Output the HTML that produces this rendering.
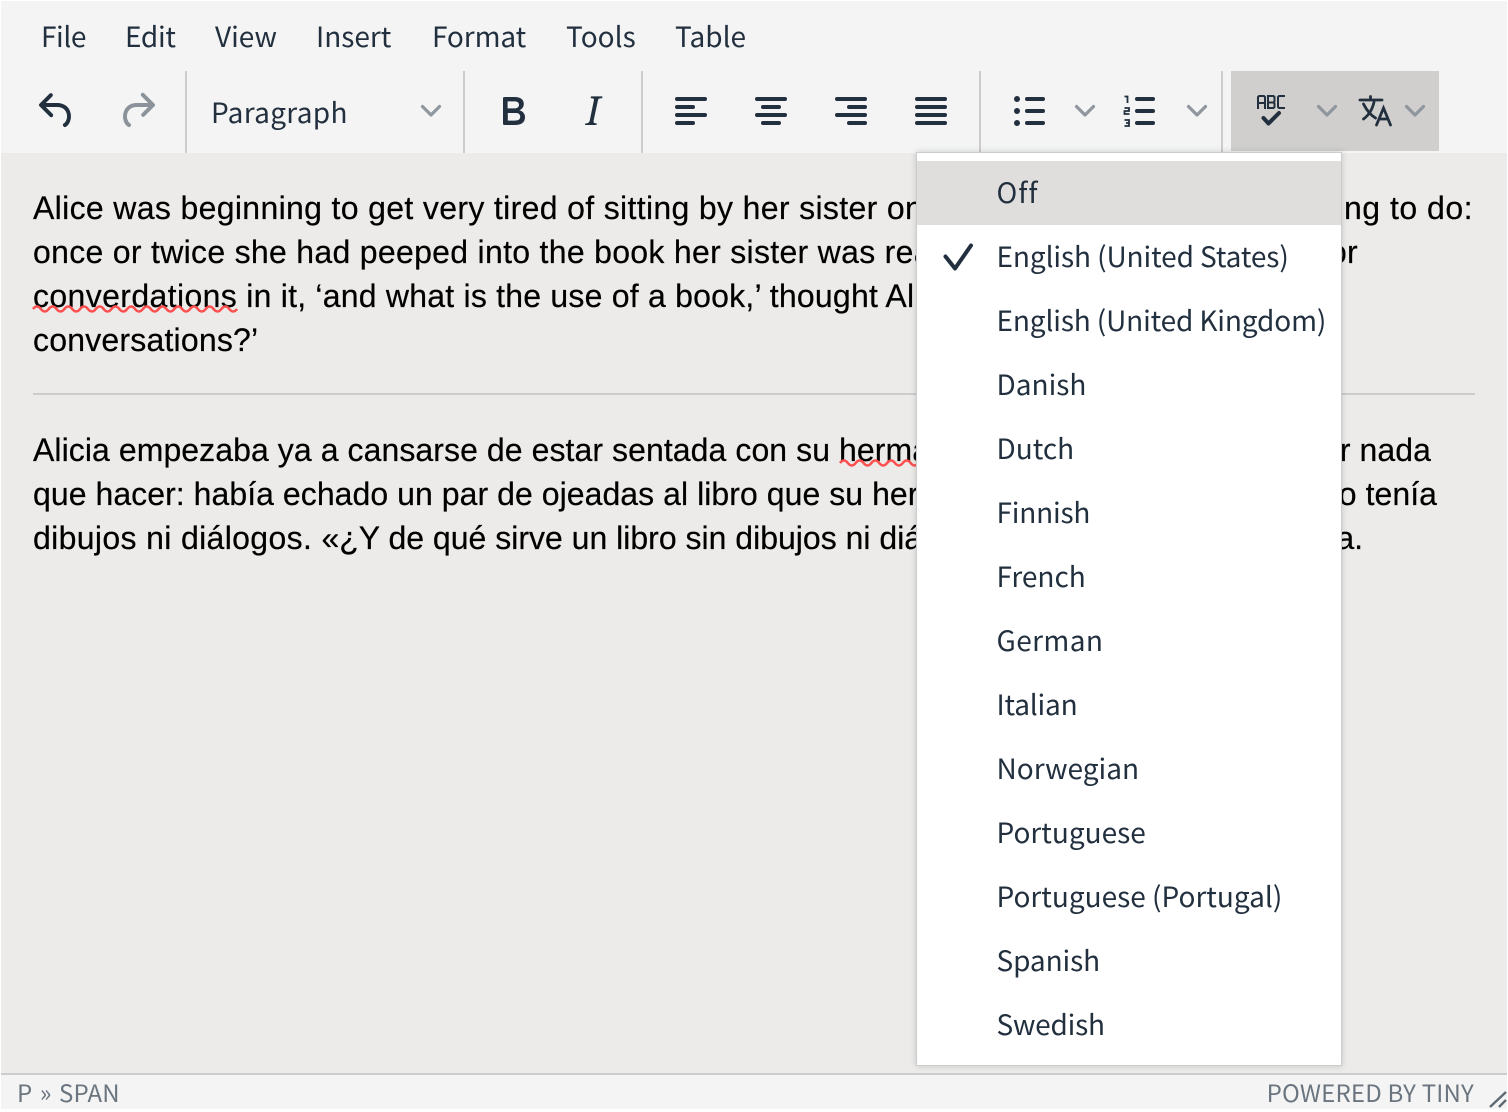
<!DOCTYPE html>
<html><head><meta charset="utf-8">
<style>
html,body{margin:0;padding:0;width:1508px;height:1110px;overflow:hidden;background:#fff}
*{box-sizing:border-box}
#a{position:absolute;left:1px;width:1506px;background:#ecebe9}
.t{position:absolute;white-space:nowrap;font-family:"Noto Sans CJK JP","Liberation Sans",sans-serif;color:#222f3e;font-size:28px;line-height:40px}
.c{position:absolute;white-space:nowrap;font-family:"Liberation Sans",Arial,sans-serif;color:#000;font-size:32px;line-height:44px;-webkit-text-stroke:.2px #000}
.l{left:33px}
.b{position:absolute;background:#ccc}
svg{position:absolute;left:0;top:0}
</style></head><body>
<div class="b" style="left:1px;top:1px;width:1506px;height:152px;background:#f4f4f4"></div>
<div id="a" style="top:153px;height:921px"></div>
<div class="b" style="left:1px;top:1073px;width:1506px;height:2px;background:#ccc"></div>
<div class="b" style="left:1px;top:1075px;width:1506px;height:34px;background:#f4f4f4"></div>

<div class="t" style="left:41px;top:16px;letter-spacing:-.4px">File</div>
<div class="t" style="left:125px;top:16px;letter-spacing:-.3px">Edit</div>
<div class="t" style="left:215px;top:16px">View</div>
<div class="t" style="left:316px;top:16px">Insert</div>
<div class="t" style="left:432px;top:16px;letter-spacing:-.1px">Format</div>
<div class="t" style="left:566px;top:16px">Tools</div>
<div class="t" style="left:675px;top:16px">Table</div>
<div class="t" style="left:211px;top:92px;letter-spacing:.3px">Paragraph</div>

<div class="b" style="left:185px;top:71px;width:2px;height:82px"></div>
<div class="b" style="left:463px;top:71px;width:2px;height:82px"></div>
<div class="b" style="left:641px;top:71px;width:2px;height:82px"></div>
<div class="b" style="left:979px;top:71px;width:2px;height:82px"></div>
<div class="b" style="left:1221px;top:71px;width:2px;height:82px"></div>
<div class="b" style="left:1231px;top:71px;width:208px;height:80px;background:#d0cfcd"></div>

<svg width="1508" height="1110" viewBox="0 0 1508 1110" fill="#222f3e">
<path transform="translate(33 87) scale(2)" d="M6.4 8H12c3.7 0 6.2 2 6.8 5.1.6 2.7-.4 5.6-2.3 6.8a1 1 0 0 1-1-1.8c1.1-.6 1.8-2.7 1.4-4.6-.5-2.1-2.1-3.5-4.9-3.5H6.4l3.3 3.3a1 1 0 1 1-1.4 1.4l-5-5a1 1 0 0 1 0-1.4l5-5a1 1 0 0 1 1.4 1.4L6.4 8Z"/>
<path transform="translate(113 87) scale(2)" opacity=".5" d="M17.6 10H12c-2.8 0-4.4 1.4-4.9 3.5-.4 2 .3 4 1.4 4.6a1 1 0 1 1-1 1.8c-2-1.2-2.9-4.1-2.3-6.8.6-3 3-5.1 6.8-5.1h5.6l-3.3-3.3a1 1 0 1 1 1.4-1.4l5 5a1 1 0 0 1 0 1.4l-5 5a1 1 0 0 1-1.4-1.4l3.3-3.3Z"/>
<path transform="translate(489 87) scale(2)" d="M7.8 19c-.3 0-.5 0-.6-.2l-.2-.5V5.7c0-.2 0-.4.2-.5l.6-.2h5c1.5 0 2.7.3 3.5 1 .7.6 1.1 1.4 1.1 2.5a3 3 0 0 1-.6 1.9c-.4.6-1 1-1.6 1.2.4.1.9.3 1.3.6s.8.7 1 1.2c.4.4.5 1 .5 1.6 0 1.3-.4 2.3-1.3 3-.8.7-2.1 1-3.8 1H7.8Zm5-8.3c.6 0 1.2-.1 1.6-.5.4-.3.6-.7.6-1.3 0-1.1-.8-1.7-2.3-1.7H9.3v3.5h3.4Zm.5 6c.7 0 1.3-.1 1.7-.4.4-.4.6-.9.6-1.5s-.2-1-.7-1.4c-.4-.3-1-.4-2-.4H9.4v3.8h4Z"/>
<path transform="translate(569 87) scale(2)" d="m16.7 4.7-.1.9h-.3c-.6 0-1 0-1.4.3-.3.3-.4.6-.5 1.1l-2.1 9.8v.6c0 .5.4.8 1.4.8h.2l-.2.8H8l.2-.8h.2c1.1 0 1.8-.5 2-1.5l2-9.8.1-.5c0-.6-.4-.8-1.4-.8h-.3l.2-.9h5.8Z"/>
<g stroke="#222f3e" stroke-width="4" stroke-linecap="round" fill="none">
<path d="M677 99h28M677 107h16M677 115h28M677 123h16"/>
<path d="M757 99h28M763 107h16M757 115h28M763 123h16"/>
<path d="M837 99h28M849 107h16M837 115h28M849 123h16"/>
<path d="M917 99h28M917 107h28M917 115h28M917 123h28"/>
<path d="M1027 99h16M1027 111h16M1027 123h16"/>
<path d="M1137 99h16M1137 111h16M1137 123h16"/>
</g>
<circle cx="1017" cy="99" r="3"/><circle cx="1017" cy="111" r="3"/><circle cx="1017" cy="123" r="3"/>
<g stroke="#222f3e" stroke-width="1.800" fill="none">
<path d="M1124.500 96.500h3v6.500"/>
<path d="M1124.500 108h4.500v3h-4.500v3h5"/>
<path d="M1124.500 120h4.500v6h-4.500M1126 123h3"/>
</g>
<g stroke="#8f969e" stroke-width="3.2" stroke-linecap="round" stroke-linejoin="round" fill="none">
<path d="M422.500 106.500l8.500 8.500 8.500-8.500"/>
<path d="M1076.500 106.500l8.500 8.500 8.500-8.500"/>
<path d="M1188.500 106.500l8.500 8.500 8.500-8.500"/>
<path d="M1318.500 106.500l8.500 8.500 8.500-8.500"/>
<path d="M1406.500 106.500l8.500 8.500 8.500-8.500"/>
</g>
<g stroke="#222f3e" stroke-width="2" fill="none">
<path d="M1258 109V97l1-1h5l1 1v12M1258 103h7"/>
<path d="M1268 95.500v13M1267 96h6.500l1 1v4.500l-1 1h-5.500M1273.500 102.500l1 1v3.500l-1 1h-6.500"/>
<path d="M1285 96h-6l-1 1v10l1 1h6"/>
</g>
<path d="M1263.500 118l5 5.500 10.500-10.500" stroke="#222f3e" stroke-width="4" stroke-linecap="round" stroke-linejoin="round" fill="none"/>
<g stroke="#222f3e" stroke-width="2.800" fill="none" stroke-linecap="round">
<path d="M1360 100h22M1370.500 96.500V100"/>
<path d="M1363.500 104c3 6 7 11 12 14M1374 102c-1.500 7-5 13-10.500 17"/>
<path d="M1376.500 125l7-17 7 17M1379 119h9"/>
</g>
</svg>

<div class="c l" style="top:186px;letter-spacing:.34px">Alice was beginning to get very tired of sitting by her sister on the</div>
<div class="c" style="top:186px;right:35px;letter-spacing:.5px">bank, and of having nothing to do:</div>
<div class="c l" style="top:230px;letter-spacing:.3px">once or twice she had peeped into the book her sister was reading,</div>
<div class="c" style="top:230px;right:150px;letter-spacing:.3px">but it had no pictures or</div>
<div class="c l" style="top:274px;letter-spacing:.22px"><span style="letter-spacing:.38px">converdations</span> in it, ‘and what is the use of a book,’ thought Alice</div>
<div class="c l" style="top:318px;letter-spacing:.2px">conversations?’</div>
<div class="b" style="left:33px;top:393px;width:1442px;height:2px"></div>
<div class="c l" style="top:428px;letter-spacing:.07px">Alicia empezaba ya a cansarse de estar sentada con su hermana en la</div>
<div class="c" style="top:428px;right:77px;letter-spacing:.07px">orilla del río, sin tener nada</div>
<div class="c l" style="top:472px;letter-spacing:.05px">que hacer: había echado un par de ojeadas al libro que su hermana</div>
<div class="c" style="top:472px;right:71px;letter-spacing:.05px">estaba leyendo, pero no tenía</div>
<div class="c l" style="top:516px"><span style="letter-spacing:.35px">dibujos ni diálogos. </span>«¿Y de qué sirve un libro sin dibujos ni diálogos?»,</div>
<div class="c" style="top:516px;right:145px">se preguntaba Alicia.</div>

<svg width="1508" height="1110" viewBox="0 0 1508 1110">
<g stroke="#ff5050" stroke-width="2.600" fill="none">
<path d="M33 309q3.925-5 7.850 0t7.850 0t7.850 0t7.850 0t7.850 0t7.850 0t7.850 0t7.850 0t7.850 0t7.850 0t7.850 0t7.850 0t7.850 0t7.850 0t7.850 0t7.850 0t7.850 0t7.850 0t7.850 0t7.850 0t7.850 0t7.850 0t7.850 0t7.850 0t7.850 0t7.850 0"/>
<path d="M840 463q3.925-5 7.850 0t7.850 0t7.850 0t7.850 0t7.850 0t7.850 0t7.850 0t7.850 0t7.850 0t7.850 0"/>
</g>
</svg>

<div style="position:absolute;left:916px;top:152px;width:426px;height:914px;background:#fff;border:1px solid #ccc;box-shadow:0 0 6px rgba(34,47,62,.2)"></div>
<div style="position:absolute;left:917px;top:161px;width:424px;height:64px;background:#dfdedc"></div>
<svg width="1508" height="1110" viewBox="0 0 1508 1110"><path d="M945.500 256.500l9.500 12 16-23" stroke="#222f3e" stroke-width="4" stroke-linecap="round" stroke-linejoin="round" fill="none"/></svg>
<div class="t" style="left:996.500px;top:172px;letter-spacing:1px">Off</div>
<div class="t" style="left:996.500px;top:236px;letter-spacing:-.1px">English (United States)</div>
<div class="t" style="left:996.500px;top:300px;letter-spacing:-.14px">English (United Kingdom)</div>
<div class="t" style="left:996.500px;top:364px">Danish</div>
<div class="t" style="left:996.500px;top:428px">Dutch</div>
<div class="t" style="left:996.500px;top:492px;letter-spacing:-.2px">Finnish</div>
<div class="t" style="left:996.500px;top:556px">French</div>
<div class="t" style="left:996.500px;top:620px;letter-spacing:.4px">German</div>
<div class="t" style="left:996.500px;top:684px;letter-spacing:-.2px">Italian</div>
<div class="t" style="left:996.500px;top:748px">Norwegian</div>
<div class="t" style="left:996.500px;top:812px">Portuguese</div>
<div class="t" style="left:996.500px;top:876px">Portuguese (Portugal)</div>
<div class="t" style="left:996.500px;top:940px;letter-spacing:-.1px">Spanish</div>
<div class="t" style="left:996.500px;top:1004px;letter-spacing:-.2px">Swedish</div>

<div class="t" style="left:17px;top:1072px;font-size:24px;color:#6b7580;word-spacing:2px;letter-spacing:.15px">P » SPAN</div>
<div class="t" style="right:34px;top:1072px;font-size:24px;color:#6b7580;letter-spacing:.2px">POWERED BY TINY</div>
<svg width="1508" height="1110" viewBox="0 0 1508 1110"><path d="M1490 1107l16-15M1499 1107l7-7" stroke="#5f6a75" stroke-width="2.400" fill="none"/></svg>
</body></html>
